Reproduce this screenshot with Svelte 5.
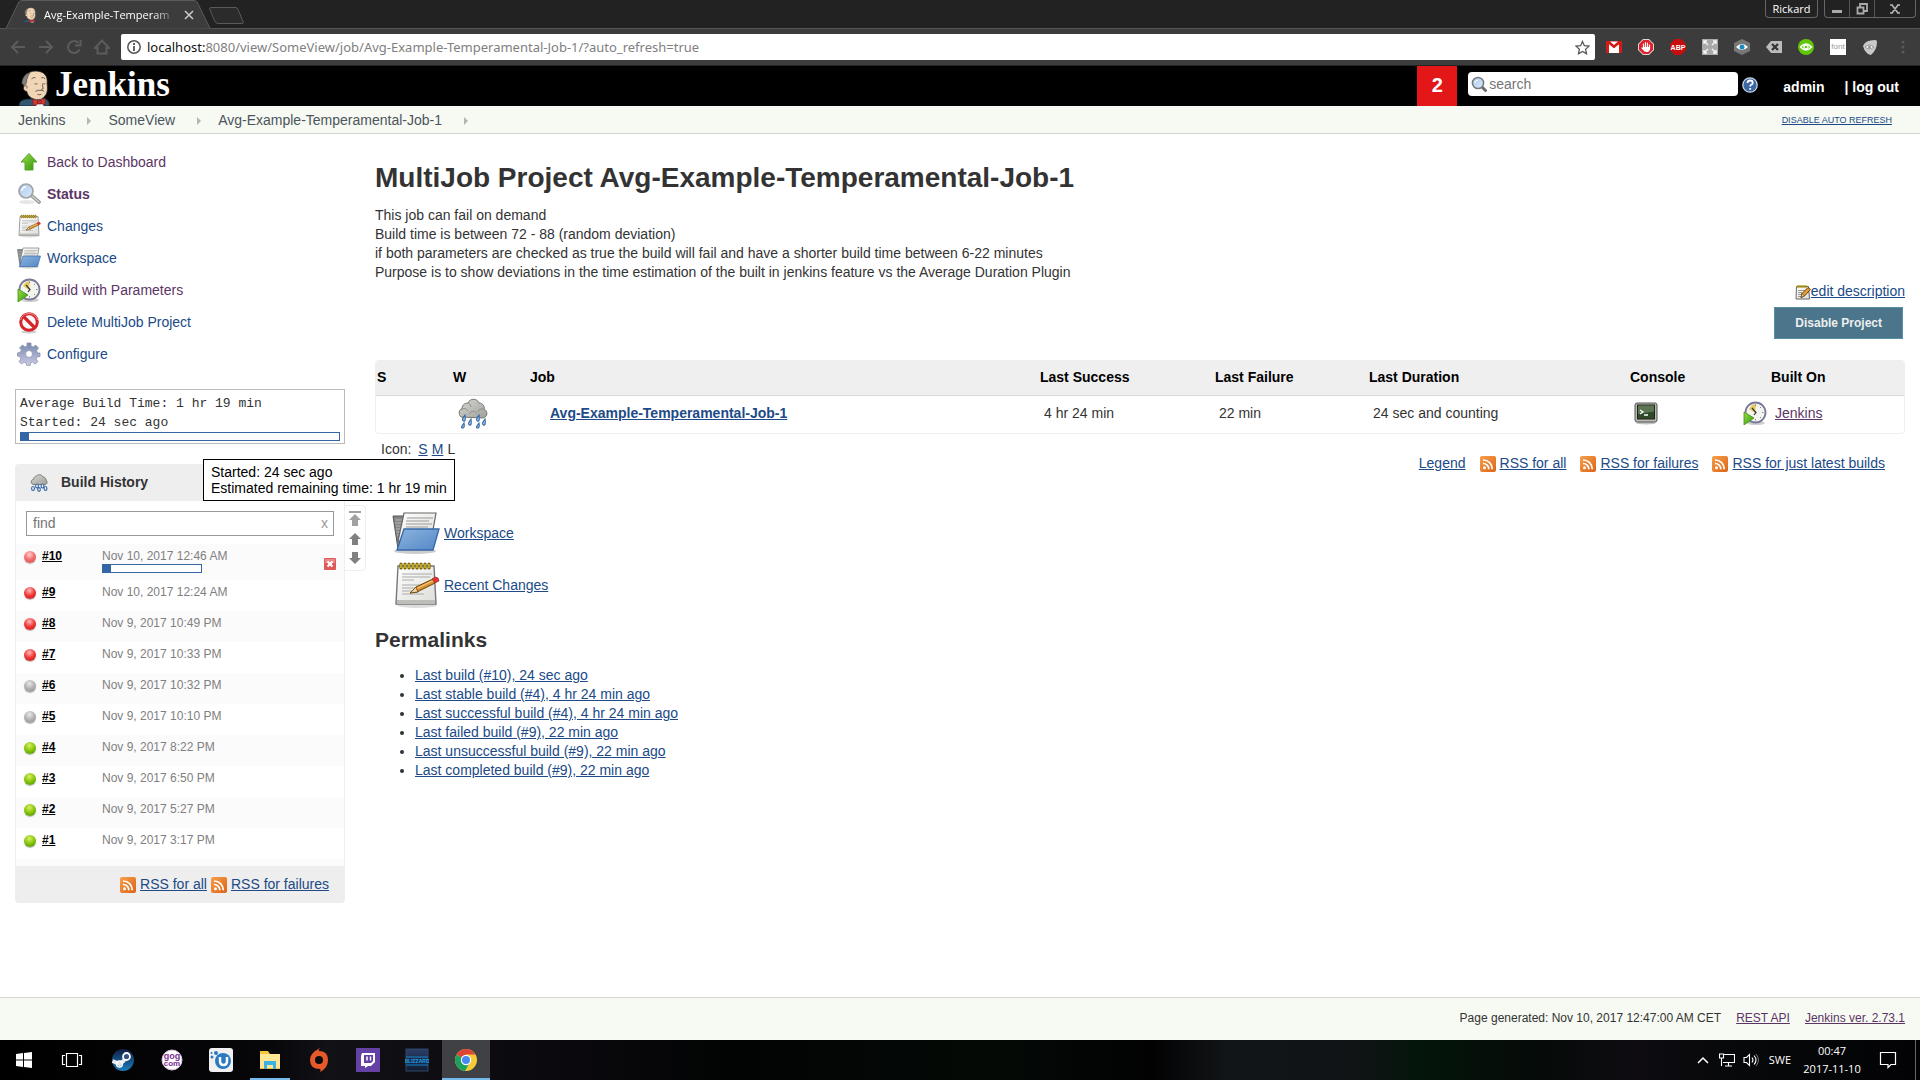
<script>
  const tasks = [
    { icon: 'up', label: 'Back to Dashboard', visited: true },
    { icon: 'magnifier', label: 'Status', visited: true, current: true },
    { icon: 'notepad', label: 'Changes' },
    { icon: 'folder', label: 'Workspace' },
    { icon: 'clock', label: 'Build with Parameters', visited: true },
    { icon: 'forbidden', label: 'Delete MultiJob Project' },
    { icon: 'gear', label: 'Configure' }
  ];
  const builds = [
    { id: 10, date: 'Nov 10, 2017 12:46 AM', ball: 'fade', running: true },
    { id: 9, date: 'Nov 10, 2017 12:24 AM', ball: 'red' },
    { id: 8, date: 'Nov 9, 2017 10:49 PM', ball: 'red' },
    { id: 7, date: 'Nov 9, 2017 10:33 PM', ball: 'red' },
    { id: 6, date: 'Nov 9, 2017 10:32 PM', ball: 'grey' },
    { id: 5, date: 'Nov 9, 2017 10:10 PM', ball: 'grey' },
    { id: 4, date: 'Nov 9, 2017 8:22 PM', ball: 'green' },
    { id: 3, date: 'Nov 9, 2017 6:50 PM', ball: 'green' },
    { id: 2, date: 'Nov 9, 2017 5:27 PM', ball: 'green' },
    { id: 1, date: 'Nov 9, 2017 3:17 PM', ball: 'green' }
  ];
  const permalinks = [
    'Last build (#10), 24 sec ago',
    'Last stable build (#4), 4 hr 24 min ago',
    'Last successful build (#4), 4 hr 24 min ago',
    'Last failed build (#9), 22 min ago',
    'Last unsuccessful build (#9), 22 min ago',
    'Last completed build (#9), 22 min ago'
  ];
  const crumbs = ['Jenkins', 'SomeView', 'Avg-Example-Temperamental-Job-1'];
  const extensions = ['gmail', 'adblock', 'abp', 'expand', 'eye', 'clear', 'ring', 'font', 'shield'];
  const apps = ['start', 'taskview', 'steam', 'gog', 'uplay', 'explorer', 'origin', 'twitch', 'blizzard', 'chrome'];
</script>

{#snippet mascot(cls)}
  <svg class={cls} viewBox="0 0 34 37" aria-hidden="true">
    <path d="M1 37c0-4 2-6 7-7l18-1c5 1 7 4 6 8z" fill="#33566f" stroke="#16242e" stroke-width=".8" />
    <path d="M17 30l5-2 5 3-1 6h-7z" fill="#f4f4f4" />
    <path d="M6 17C4 9 9 1 18 1c9 0 13 5 12 13 1 8 0 12-6 16-7 2-14-2-15-8-3 0-4-3-3-5z" fill="#f0d6b7" stroke="#231f20" stroke-width=".8" />
    <path d="M4 14C4 8 8 3 12 3c-2 3-2 5-3 7 0 3-1 5-2 6z" fill="#81807c" stroke="#3a3a38" stroke-width=".6" />
    <path d="M7 17c2-2 3 0 2 2M14 9q2-2 4-1M24 8q2-1 4 1M17 14q2 1 3 0M25 14q2 1 3 0M25 15l1 4-2 1" fill="none" stroke="#4a3b33" stroke-width=".8" />
    <path d="M18 22q3-2 4-1 3-1 5 1M20 25q2 1 4 0" fill="none" stroke="#4a3b33" stroke-width=".8" />
    <path d="M15 30l6 2 7-3v7l-6-2-6 3zM20 31h4v4h-4z" fill="#d33833" stroke="#7b1512" stroke-width=".6" />
  </svg>
{/snippet}

{#snippet icon(name, size)}
  {#if name === 'up'}
    <svg width={size} height={size} viewBox="0 0 24 24" aria-hidden="true">
      <path d="M12 3.500l8 8.500h-4v8H8v-8H4z" fill="url(#g-green)" stroke="#5aa02c" stroke-width="1" />
    </svg>
  {:else if name === 'magnifier'}
    <svg width={size} height={size} viewBox="0 0 24 24" aria-hidden="true">
      <ellipse cx="10" cy="20" rx="8" ry="2" fill="#ddd" opacity=".7" />
      <path d="M15 14l7 6" stroke="#8b8d89" stroke-width="3.600" stroke-linecap="round" />
      <path d="M15 14l7 6" stroke="#d5d6d2" stroke-width="1.500" stroke-linecap="round" />
      <circle cx="9" cy="9" r="7" fill="url(#g-glass)" stroke="#a2a5a8" stroke-width="1.700" />
      <path d="M5 9q0-4 4-4" stroke="#fff" fill="none" stroke-width="1.400" />
    </svg>
  {:else if name === 'find'}
    <svg width={size} height={size} viewBox="0 0 16 16" aria-hidden="true">
      <path d="M10.500 10.500l4 4" stroke="#6a6c6a" stroke-width="3" stroke-linecap="round" />
      <circle cx="7" cy="7" r="5.600" fill="url(#g-glass)" stroke="#75787c" stroke-width="1.500" />
      <path d="M4 7q0-3 3-3" stroke="#fff" fill="none" stroke-width="1" />
    </svg>
  {:else if name === 'edit'}
    <svg width={size} height={size} viewBox="0 0 16 16" aria-hidden="true">
      <path d="M1.500 2.500h12l1 12.500H1z" fill="url(#g-paper)" stroke="#666" stroke-width="1" />
      <path d="M3 1v3M5 1v3M7 1v3M9 1v3M11 1v3" stroke="#b59a10" stroke-width="1.300" />
      <path d="M3 6.500h7M3 8.500h4M3 10.500h3M3 12.500h3" stroke="#999" />
      <path d="M6 13.500l1-4 6-6 2.500 2-6 6.500z" fill="#e39b31" stroke="#5c3a08" stroke-width=".9" />
      <path d="M6 13.500l1-4 2.500 2.500z" fill="#f0deb4" stroke="#5c3a08" stroke-width=".7" />
    </svg>
  {:else if name === 'notepad'}
    <svg width={size} height={size} viewBox="0 0 48 48" aria-hidden="true">
      <ellipse cx="25" cy="44" rx="20" ry="3" fill="#bbb" opacity=".5" />
      <path d="M6 5h36l2 38H4z" fill="url(#g-paper)" stroke="#777" stroke-width="1.400" />
      <path d="M5 39h38v4H5z" fill="#bdbdb9" />
      <path d="M10 13h30M10 16h28M10 19h12M10 24h24M10 27h20M10 30h14M10 33h22" stroke="#aaa" stroke-width="1" />
      <path d="M9 3v4M13 3v4M17 3v4M21 3v4M25 3v4M29 3v4M33 3v4M37 3v4" stroke="#7b6500" stroke-width="3.200" stroke-linecap="round" />
      <path d="M9 3v4M13 3v4M17 3v4M21 3v4M25 3v4M29 3v4M33 3v4M37 3v4" stroke="#e6cb38" stroke-width="1.300" />
      <path d="M18 32l6-6 17-8 2 4-18 9z" fill="#d9902c" stroke="#6b4106" stroke-width="1" />
      <path d="M24 27l17-8 1 1-17 8z" fill="#f3c06c" />
      <path d="M18 32l6-6 2 5z" fill="#e8d2a8" stroke="#6b4106" stroke-width=".8" />
      <path d="M40 18l3-2q4 0 4 4l-4 2z" fill="#ee2e2e" stroke="#8b3a2a" stroke-width=".7" />
    </svg>
  {:else if name === 'folder'}
    <svg width={size} height={size} viewBox="0 0 48 48" aria-hidden="true">
      <ellipse cx="23" cy="42" rx="21" ry="3" fill="#999" opacity=".5" />
      <path d="M1 7h12l2 3h8v30H6z" fill="#858585" stroke="#555" stroke-width="1" />
      <path d="M3 11h9M3 14h9M4 17h8M4 20h8M4 23h8M5 26h6" stroke="#b8b8b8" stroke-width="1" />
      <path d="M12 4h32l-5 28H6z" fill="url(#g-paper)" stroke="#666" stroke-width="1.200" />
      <path d="M15 9h26M14 12h23M14 15h26M14 18h22" stroke="#999" stroke-width="1" />
      <path d="M12 20h35l-6 21H5z" fill="url(#g-blue)" stroke="#3567a8" stroke-width="1.300" />
    </svg>
  {:else if name === 'clock'}
    <svg width={size} height={size} viewBox="0 0 24 24" aria-hidden="true">
      <ellipse cx="13" cy="22" rx="9" ry="2" fill="#bbb" opacity=".7" />
      <circle cx="12.500" cy="11.500" r="10" fill="#f4f4ee" stroke="#78799b" stroke-width="1.800" />
      <path d="M12 12L6 8l3-4 4-1z" fill="#e5c95a" />
      <path d="M12.500 3.500v1.500M20.500 11.500H19M12.500 19.500V18M18 6l-1 1M18 17l-1-1" stroke="#888" stroke-width="1" />
      <path d="M9 7l4 4.500-2 2.500" fill="none" stroke="#333" stroke-width="1.200" />
      <path d="M1 11l10 6-10 7z" fill="url(#g-green)" stroke="#3f8f0c" stroke-width=".8" />
    </svg>
  {:else if name === 'forbidden'}
    <svg width={size} height={size} viewBox="0 0 24 24" aria-hidden="true">
      <ellipse cx="12" cy="22" rx="8" ry="1.500" fill="#bbb" opacity=".7" />
      <circle cx="12" cy="12" r="8.300" fill="#fafafa" stroke="#d6262a" stroke-width="3" />
      <path d="M6.500 6.500l11 11" stroke="#d6262a" stroke-width="3.200" />
      <path d="M3.500 10a8.800 8.800 0 0 1 17 0" fill="none" stroke="#f08c8c" stroke-width="1" />
    </svg>
  {:else if name === 'gear'}
    <svg width={size} height={size} viewBox="0 0 24 24" aria-hidden="true">
      <g stroke="#8a93ac" stroke-width=".8">
        <path d="M10 4V1h4v3l2.500 1L18.500 3l3 3-2 2.500L20.500 11H23v3.500l-3 .5-1 2 2 2.500-3 2.500-2.500-2-2 1-.5 3h-3l-1-3-2-1L4.500 22 2 19.500 4 17l-1-2.500-2.500-.5v-3L3.500 10l1-2L2.500 6l3-3L8 5z" fill="url(#g-gear)" />
        <circle cx="12" cy="12" r="3.500" fill="#fff" />
      </g>
    </svg>
  {:else if name === 'rain'}
    <svg width={size} height={size} viewBox="0 0 32 32" aria-hidden="true">
      <path d="M4 20c-3-3-2-8 1-8 0-5 4-6 6-6 2-5 9-5 11 0 4 0 6 4 5 6 4 2 4 8-1 9z" fill="url(#g-cloud)" stroke="#757570" stroke-width="1" />
      <path d="M5 12q4-2 6 2M11 6q3 1 3 4M27 12q-5-1-6 3M12 17q3-5 8-1" fill="none" stroke="#92928c" stroke-width="1" />
      <g fill="#a9c7ec" stroke="#3465a4" stroke-width="1.100">
        <path d="M8 18q-4 5-1.500 6T8 18zM14 22q-4 5-1.500 6T14 22zM22 18q-4 5-1.500 6T22 18zM28 22q-4 5-1.500 6T28 22zM7 26q-4 5-1.500 5T7 26zM22 26q-4 5-1.500 5T22 26z" />
      </g>
    </svg>
  {:else if name === 'rain-small'}
    <svg width={size} height={size} viewBox="0 0 18 18" aria-hidden="true">
      <path d="M3 10.500C0 9 1 5.500 3.500 5.500 4 2 6 2.500 7 1.500c2-1.500 5-1 6 1.500 2 0 3 1.500 3 3 2 2 1 4.500-1 4.500z" fill="url(#g-cloud)" stroke="#757570" stroke-width=".9" />
      <g fill="#fff" stroke="#3465a4" stroke-width="1.200">
        <ellipse cx="3" cy="14.500" rx="1.400" ry="2" /><ellipse cx="7" cy="12" rx="1.400" ry="2" /><ellipse cx="9" cy="15.500" rx="1.300" ry="1.800" /><ellipse cx="12.500" cy="12" rx="1.400" ry="2" /><ellipse cx="15.500" cy="14.500" rx="1.400" ry="2" />
      </g>
    </svg>
  {:else if name === 'console'}
    <svg width={size} height={size} viewBox="0 0 24 24" aria-hidden="true">
      <ellipse cx="12" cy="22" rx="10" ry="1.500" fill="#999" opacity=".6" />
      <rect x="1" y="2" width="22" height="19" rx="2" fill="#b9bab5" stroke="#555753" />
      <rect x="3.500" y="4" width="17" height="14" fill="#2f4a27" stroke="#20241d" />
      <path d="M4 4.500h16v6L4 13z" fill="#5c7653" />
      <path d="M6 9l3 2-3 2M10 14h4" fill="none" stroke="#fff" stroke-width="1.300" />
    </svg>
  {:else if name === 'rss'}
    <svg width={size} height={size} viewBox="0 0 16 16" aria-hidden="true">
      <rect width="16" height="16" rx="2" fill="url(#g-orange)" />
      <circle cx="4.500" cy="11.800" r="1.500" fill="#fff" />
      <path d="M3 7.500a5.700 5.700 0 0 1 5.800 5.800M3 4a9.200 9.200 0 0 1 9.300 9.300" fill="none" stroke="#fff" stroke-width="1.700" />
    </svg>
  {/if}
{/snippet}

{#snippet rss(label)}
  <span class="rss">{@render icon('rss', 16)}<a href="#rss">{label}</a></span>
{/snippet}

<svg class="defs" width="0" height="0" aria-hidden="true">
  <defs>
    <linearGradient id="g-green" x1="0" y1="0" x2="1" y2="1"><stop offset="0" stop-color="#9be04b" /><stop offset="1" stop-color="#2f9407" /></linearGradient>
    <linearGradient id="g-glass" x1="0" y1="0" x2="1" y2="1"><stop offset="0" stop-color="#a9c9ee" /><stop offset="1" stop-color="#deebf8" /></linearGradient>
    <linearGradient id="g-paper" x1="0" y1="0" x2="1" y2="1"><stop offset="0" stop-color="#fff" /><stop offset="1" stop-color="#dcdcd8" /></linearGradient>
    <linearGradient id="g-blue" x1="0" y1="0" x2="1" y2="1"><stop offset="0" stop-color="#8db4dd" /><stop offset="1" stop-color="#5388c8" /></linearGradient>
    <linearGradient id="g-gear" x1="0" y1="0" x2="0" y2="1"><stop offset="0" stop-color="#7488ae" /><stop offset="1" stop-color="#d0cce6" /></linearGradient>
    <linearGradient id="g-cloud" x1="0" y1="0" x2="1" y2="1"><stop offset="0" stop-color="#d6d6d2" /><stop offset="1" stop-color="#a0a09b" /></linearGradient>
    <linearGradient id="g-orange" x1="0" y1="0" x2="1" y2="1"><stop offset="0" stop-color="#f7a04c" /><stop offset="1" stop-color="#dc6417" /></linearGradient>
    <linearGradient id="g-steam" x1="0" y1="0" x2="0" y2="1"><stop offset="0" stop-color="#101f45" /><stop offset="1" stop-color="#1b7fc0" /></linearGradient>
    <linearGradient id="g-bliz" x1="0" y1="0" x2="0" y2="1"><stop offset="0" stop-color="#2b3e66" /><stop offset="1" stop-color="#101d33" /></linearGradient>
  </defs>
</svg>

<div class="screen">
  <div class="tabstrip">
    <div class="tab">
      <svg class="tab-shape" viewBox="0 0 208 29" preserveAspectRatio="none" aria-hidden="true">
        <path d="M0 28.500L13 2q1-1.500 3-1.500h174q2 0 3 1.500l13 26.500z" fill="#3c3c3c" />
        <path d="M0 28.500L13 2q1-1.500 3-1.500h174q2 0 3 1.500l13 26.500" fill="none" stroke="#5c5c5c" />
      </svg>
      {@render mascot('favicon')}
      <span class="tab-title">Avg-Example-Temperam</span>
      <button class="tab-close" aria-label="Close tab">
        <svg width="10" height="10" viewBox="0 0 10 10"><path d="M1 1l8 8M9 1L1 9" stroke="#c8c8c8" stroke-width="1.600" /></svg>
      </button>
    </div>
    <button class="new-tab" aria-label="New tab">
      <svg width="36" height="18" viewBox="0 0 36 18"><path d="M2 .5h25q1 0 2 2l5 12q1 2-1 2H9q-2 0-3-2L1 3Q0 .5 2 .5z" fill="#2b2b2b" stroke="#5a5a5a" /></svg>
    </button>
    <div class="window-controls">
      <button class="profile">Rickard</button>
      <div class="win-buttons">
        <button aria-label="Minimize"><svg width="12" height="12" viewBox="0 0 12 12"><path d="M1 8.500h10" stroke="#aaa" stroke-width="3" /></svg></button>
        <button aria-label="Restore"><svg width="12" height="12" viewBox="0 0 12 12"><path d="M4 4V1h7v7H8M1.500 4.500h6v6h-6z" fill="none" stroke="#aaa" stroke-width="1.800" /></svg></button>
        <button class="wide" aria-label="Close"><svg width="10" height="10" viewBox="0 0 10 10"><path d="M2 1l6 8M8 1L2 9M0 1h3M7 1h3M0 9h3M7 9h3" stroke="#b5b5b5" stroke-width="1.600" /></svg></button>
      </div>
    </div>
  </div>

  <div class="toolbar">
    <div class="nav">
      <button aria-label="Back"><svg viewBox="0 0 16 16"><path d="M15 8H2M8 2L2 8l6 6" /></svg></button>
      <button aria-label="Forward"><svg viewBox="0 0 16 16"><path d="M1 8h13M8 2l6 6-6 6" /></svg></button>
      <button aria-label="Reload"><svg viewBox="0 0 16 16"><path d="M13.500 10.500A6 6 0 1 1 12.500 4M14.500 1v5.500H9" /></svg></button>
      <button aria-label="Home"><svg viewBox="0 0 16 16"><path d="M1 9l7-7.500L15 9h-2.500v5.500h-9V9z" /></svg></button>
    </div>
    <div class="omnibox">
      <svg width="14" height="14" viewBox="0 0 14 14" aria-hidden="true"><circle cx="7" cy="7" r="6.200" fill="none" stroke="#555" stroke-width="1.500" /><path d="M7 3v2M7 6v5" stroke="#555" stroke-width="1.800" /></svg>
      <span class="url"><b>localhost:</b>8080/view/SomeView/job/Avg-Example-Temperamental-Job-1/?auto_refresh=true</span>
      <button class="star" aria-label="Bookmark this page">
        <svg width="15" height="15" viewBox="0 0 16 16"><path d="M8 1.500l2 4.500 5 .5-3.700 3.300 1 4.900L8 12.200l-4.300 2.500 1-4.900L1 6.500 6 6z" fill="none" stroke="#555" stroke-width="1.300" /></svg>
      </button>
    </div>
    <div class="extensions">
      {#each extensions as name}
        <button aria-label={name}>
          <svg width="16" height="16" viewBox="0 0 16 16">
            {#if name === 'gmail'}
              <rect y="2" width="16" height="12" rx="1" fill="#d21c16" /><path d="M3 14V5l5 4 5-4v9z" fill="#fff" /><path d="M2 3l6 5 6-5" fill="none" stroke="#d21c16" stroke-width="2" /><path d="M4 2.500h8L8 6z" fill="#fff" />
            {:else if name === 'adblock'}
              <path d="M5 0h6l5 5v6l-5 5H5l-5-5V5z" fill="#d9d9d9" /><path d="M5.300 1h5.400L15 5.300v5.400L10.700 15H5.300L1 10.700V5.300z" fill="#e0212b" /><path d="M5.500 5v4M7.500 3.500v5M9.500 4v5M11.500 6v4M4 9l3 3" stroke="#fff" stroke-width="1.200" fill="none" stroke-linecap="round" /><path d="M5 8h7v3l-2 2H8l-3-3z" fill="#fff" />
            {:else if name === 'abp'}
              <path d="M5 0h6l5 5v6l-5 5H5l-5-5V5z" fill="#c70d0d" /><text x="8" y="11" text-anchor="middle" font-size="7" font-weight="700" fill="#fff">ABP</text>
            {:else if name === 'expand'}
              <rect width="16" height="16" fill="#aaa" /><path d="M2 5V2h3M11 2h3v3M14 11v3h-3M5 14H2v-3M2 2l4 4M14 2l-4 4M14 14l-4-4M2 14l4-4" stroke="#f5f5f5" stroke-width="1.400" fill="none" />
            {:else if name === 'eye'}
              <path d="M8 0l8 4v8l-8 4-8-4V4z" fill="#777" /><path d="M2 8q6-6 12 0-6 6-12 0z" fill="#fff" /><circle cx="8" cy="8" r="2.500" fill="#1b8cc0" />
            {:else if name === 'clear'}
              <path d="M5 2h11v12H5L0 8z" fill="#bbb" /><path d="M6 5l6 6M12 5l-6 6" stroke="#333" stroke-width="2.200" />
            {:else if name === 'ring'}
              <circle cx="8" cy="8" r="8" fill="#5fc60a" /><path d="M2.500 8q5.500-6 11 0-5.500 6-11 0z" fill="none" stroke="#fff" stroke-width="1.500" /><circle cx="8" cy="8" r="2" fill="none" stroke="#fff" stroke-width="1.300" />
            {:else if name === 'font'}
              <rect width="16" height="16" fill="#fff" /><text x="8" y="10" text-anchor="middle" font-size="8" fill="#999">font</text>
            {:else}
              <path d="M1 7Q3 1 13 1q2 0 2 2 0 8-6 13-3 0-5-3-2-2-3-6z" fill="#c9c9c9" /><path d="M3 8q4-4 9 0-5 4-9 0z" fill="#eee" stroke="#999" /><circle cx="7.500" cy="8" r="1.500" fill="#999" />
            {/if}
          </svg>
        </button>
      {/each}
      <button class="menu" aria-label="Menu"><svg width="4" height="16" viewBox="0 0 4 16" fill="#5a5a5a"><circle cx="2" cy="3" r="1.500" /><circle cx="2" cy="8" r="1.500" /><circle cx="2" cy="13" r="1.500" /></svg></button>
    </div>
  </div>

  <header>
    <a class="brand" href="#home">{@render mascot('logo')}<span>Jenkins</span></a>
    <a class="alerts" href="#alerts">2</a>
    <label class="search">
      {@render icon('find', 16)}
      <input type="text" placeholder="search" aria-label="search" />
    </label>
    <a class="help" href="#help" aria-label="Search help">
      <svg width="16" height="16" viewBox="0 0 16 16"><circle cx="8" cy="8" r="7.200" fill="#3c67a5" stroke="#c9d6e8" stroke-width="1.300" /><path d="M5.500 6q0-2.500 2.700-2.500 2.500 0 2.500 2.200 0 1.300-1.500 2-1 .5-1 1.800M8.200 11v1.800" fill="none" stroke="#fff" stroke-width="1.800" /></svg>
    </a>
    <a class="user" href="#admin">admin</a>
    <a class="logout" href="#logout">| log out</a>
  </header>

  <nav class="breadcrumbs" aria-label="Breadcrumb">
    {#each crumbs as crumb}
      <a href="#crumb">{crumb}</a>
      <svg width="4" height="8" viewBox="0 0 4 8" aria-hidden="true"><path d="M0 0l4 4-4 4z" fill="#b4b6b0" /></svg>
    {/each}
    <a class="refresh" href="#refresh">DISABLE AUTO REFRESH</a>
  </nav>

  <div class="page">
    <aside>
      <nav class="tasks" aria-label="Tasks">
        {#each tasks as task}
          <a href="#task" class:visited={task.visited} class:current={task.current}>{@render icon(task.icon, 24)}<span>{task.label}</span></a>
        {/each}
      </nav>

      <div class="average">
        <div>Average Build Time: 1 hr 19 min</div>
        <div>Started: 24 sec ago</div>
        <div class="progress"><i></i></div>
      </div>

      <section class="history">
        <h2>{@render icon('rain-small', 18)}<span>Build History</span></h2>
        <div class="tooltip" role="tooltip">Started: 24 sec ago<br />Estimated remaining time: 1 hr 19 min</div>
        <div class="pager">
          <button aria-label="Newest"><svg width="12" height="15" viewBox="0 0 12 15" fill="#a0a0a0"><path d="M0 0h12v2H0zM6 3l6 6H9v6H3V9H0z" /></svg></button>
          <button aria-label="Newer"><svg width="12" height="12" viewBox="0 0 12 12" fill="#808080"><path d="M6 0l6 6H9v6H3V6H0z" /></svg></button>
          <button aria-label="Older"><svg width="12" height="12" viewBox="0 0 12 12" fill="#808080"><path d="M6 12l6-6H9V0H3v6H0z" /></svg></button>
        </div>
        <div class="history-body">
          <div class="find">
            <input type="text" placeholder="find" aria-label="find" />
            <button aria-label="Clear">x</button>
          </div>
          <ul>
            {#each builds as build}
              <li>
                <span class="ball {build.ball}"></span>
                <a href="#build">#{build.id}</a>
                <div class="when">
                  <span>{build.date}</span>
                  {#if build.running}<div class="progress small"><i></i></div>{/if}
                </div>
                {#if build.running}
                  <button class="stop" aria-label="Cancel build"><svg width="12" height="12" viewBox="0 0 12 12"><rect width="12" height="12" rx="1" fill="#dd5a5a" /><path d="M1 1h10v4H1z" fill="#e88" /><path d="M3.500 3.500l5 5M8.500 3.500l-5 5" stroke="#fff" stroke-width="2" /></svg></button>
                {/if}
              </li>
            {/each}
          </ul>
        </div>
        <div class="history-foot">{@render rss('RSS for all')}{@render rss('RSS for failures')}</div>
      </section>
    </aside>

    <main>
      <h1>MultiJob Project Avg-Example-Temperamental-Job-1</h1>
      <p class="description">
        This job can fail on demand<br />
        Build time is between 72 - 88 (random deviation)<br />
        if both parameters are checked as true the build will fail and have a shorter build time between 6-22 minutes<br />
        Purpose is to show deviations in the time estimation of the built in jenkins feature vs the Average Duration Plugin
      </p>
      <div class="actions">
        <span class="edit">{@render icon('edit', 16)}<a href="#edit">edit description</a></span>
        <button class="disable">Disable Project</button>
      </div>

      <div class="table-frame">
        <table>
          <colgroup>
            <col class="c-s" /><col class="c-w" /><col /><col class="c-success" /><col class="c-failure" /><col class="c-duration" /><col class="c-console" /><col class="c-built" />
          </colgroup>
          <thead>
            <tr><th>S</th><th>W</th><th>Job</th><th>Last Success</th><th>Last Failure</th><th>Last Duration</th><th>Console</th><th class="built">Built On</th></tr>
          </thead>
          <tbody>
            <tr>
              <td></td>
              <td class="weather">{@render icon('rain', 32)}</td>
              <td class="job"><a href="#job">Avg-Example-Temperamental-Job-1</a></td>
              <td>4 hr 24 min</td>
              <td>22 min</td>
              <td>24 sec and counting</td>
              <td><a class="cell" href="#console" aria-label="Console">{@render icon('console', 24)}</a></td>
              <td><span class="cell">{@render icon('clock', 24)}<a class="visited" href="#node">Jenkins</a></span></td>
            </tr>
          </tbody>
        </table>
      </div>

      <div class="table-foot">
        <div class="sizes"><span>Icon:</span><a href="#s">S</a><a href="#m">M</a><span>L</span></div>
        <div class="feeds">
          <a href="#legend">Legend</a>
          {@render rss('RSS for all')}{@render rss('RSS for failures')}{@render rss('RSS for just latest builds')}
        </div>
      </div>

      <div class="shortcuts">
        <div>{@render icon('folder', 48)}<a href="#workspace">Workspace</a></div>
        <div>{@render icon('notepad', 48)}<a href="#changes">Recent Changes</a></div>
      </div>

      <h2 class="perma">Permalinks</h2>
      <ul class="links">
        {#each permalinks as link}<li><a href="#link">{link}</a></li>{/each}
      </ul>
    </main>
  </div>

  <footer>
    <span>Page generated: Nov 10, 2017 12:47:00 AM CET</span>
    <a href="#api">REST API</a>
    <a href="#version">Jenkins ver. 2.73.1</a>
  </footer>

  <div class="taskbar">
    <div class="apps">
      {#each apps as app}
        <button class={app} aria-label={app}>
          <svg width="24" height="24" viewBox="0 0 24 24">
            {#if app === 'start'}
              <path d="M4 6l7-1v6.500H4zM12 5l8-1v7.500h-8zM4 12.500h7V19l-7-1zM12 12.500h8V20l-8-1z" fill="#fff" />
            {:else if app === 'taskview'}
              <path d="M6.500 5.500h11v13h-11zM5 7.500H2.500v9H5M19 7.500h2.500v9H19" fill="none" stroke="#fff" stroke-width="1.200" />
            {:else if app === 'steam'}
              <circle cx="12" cy="12" r="11" fill="url(#g-steam)" /><path d="M1.500 13l7 3 4-3 3-5" stroke="#e8e8e8" stroke-width="4" fill="none" /><circle cx="8.500" cy="16" r="3" fill="none" stroke="#fff" stroke-width="1.300" /><circle cx="15.500" cy="8.500" r="3.500" fill="#34547e" stroke="#fff" stroke-width="1.800" />
            {:else if app === 'gog'}
              <circle cx="12" cy="12" r="10" fill="#fff" stroke="#d9c6e3" /><text x="12" y="11" text-anchor="middle" font-size="9" font-weight="700" fill="#7b2f92">gog</text><text x="12" y="18" text-anchor="middle" font-size="8" font-weight="700" fill="#7b2f92">com</text>
            {:else if app === 'uplay'}
              <rect width="24" height="24" rx="3" fill="#f0f0f0" /><circle cx="14" cy="13" r="8" fill="#2b79c2" /><path d="M11 9v4q0 4 3.500 4t3.500-4V9" fill="none" stroke="#fff" stroke-width="2.500" /><circle cx="7" cy="5" r="2" fill="#2b79c2" /><circle cx="3" cy="9" r="1.500" fill="#2b79c2" /><circle cx="2.500" cy="5" r="1" fill="#2b79c2" />
            {:else if app === 'explorer'}
              <path d="M2 3h8l2 3h10v15H2z" fill="#f5c542" /><path d="M2 6h20v14H2z" fill="#ffe594" /><path d="M6 21v-8h12v8h-3v-4H9v4z" fill="#3cb2e2" />
            {:else if app === 'origin'}
              <path d="M13 0q-2 3-1 3 9 0 9 9 0 8-8 12 1-3 0-3-10 0-10-9Q3 5 13 0z" fill="#e5592b" /><circle cx="12" cy="12" r="4" fill="#0b0c10" />
            {:else if app === 'twitch'}
              <rect width="24" height="24" fill="#6441a5" /><path d="M6 5h13v9l-4 4h-3l-3 2v-2H5V8z" fill="#fff" /><path d="M8 7h9v6l-2 2H8z" fill="#6441a5" /><path d="M11 8.500v4M14.500 8.500v4" stroke="#fff" stroke-width="1.500" />
            {:else if app === 'blizzard'}
              <rect x="1" y="1" width="22" height="22" fill="url(#g-bliz)" stroke="#32466b" /><text class="bliz" x="12" y="15" text-anchor="middle" font-size="5" font-weight="700" fill="#1aa4ee">BLIZZARD</text><path d="M1 9h22M1 17h22" stroke="#1187c9" />
            {:else}
              <circle cx="12" cy="12" r="11" fill="#f7cb38" /><path d="M12 12L2.500 6.500A11 11 0 0 1 21.500 6.500H12z" fill="#dc4437" /><path d="M2.500 6.500A11 11 0 0 0 11 23l5-8.700-8.500 0z" fill="#1ba15c" /><path d="M2.500 6.500L7 14.500l5-2.500z" fill="#1ba15c" /><circle cx="12" cy="12" r="5.200" fill="#fff" /><circle cx="12" cy="12" r="4" fill="#4688f1" />
            {/if}
          </svg>
        </button>
      {/each}
    </div>
    <div class="tray">
      <svg width="12" height="8" viewBox="0 0 12 8" aria-hidden="true"><path d="M1 7l5-5 5 5" fill="none" stroke="#fff" stroke-width="1.500" /></svg>
      <svg width="16" height="14" viewBox="0 0 16 14" aria-hidden="true"><path d="M5 1.500h10.500v8H4M9.500 10v3M6 13h7M.5 1h4v4h-4zM2.500 5v8" fill="none" stroke="#fff" stroke-width="1.100" /></svg>
      <svg width="16" height="14" viewBox="0 0 16 14" aria-hidden="true"><path d="M1 4.500h2.500l3-3v11l-3-3H1zM9 4.500q2 2.500 0 5M11 2.500q4 4.500 0 9" fill="none" stroke="#fff" stroke-width="1.100" /><path d="M13 1q5 6 0 12" fill="none" stroke="#777" /></svg>
      <span class="lang">SWE</span>
      <div class="time"><span>00:47</span><span>2017-11-10</span></div>
      <svg width="18" height="18" viewBox="0 0 18 18" aria-hidden="true"><path d="M1.500 1.500h15v12H12l-3 3v-3H1.500z" fill="none" stroke="#fff" stroke-width="1.200" /></svg>
      <span class="peek"></span>
    </div>
  </div>
</div>

<style>
  :global(body) { margin: 0; background: #fff; }
  * { box-sizing: border-box; }
  .screen { display: flex; flex-direction: column; min-height: 100vh; font: 14px/19px "Liberation Sans", Arial, sans-serif; color: #333; }
  svg { display: block; flex: none; }
  svg text { font-family: "Liberation Sans", Arial, sans-serif; }
  .defs { position: absolute; }
  button { font: inherit; color: inherit; background: none; border: 0; padding: 0; display: flex; align-items: center; justify-content: center; }
  a { color: #204a87; }
  .visited, footer a { color: #5c3566; }

  .tabstrip { display: flex; height: 29px; background: #222; border-bottom: 1px solid #555; padding-left: 6px; font: 11px/16px "Open Sans", "Noto Sans", sans-serif; }
  .tab { position: relative; display: flex; align-items: center; width: 206px; height: 29px; padding: 0 18px 0 17px; gap: 7px; }
  .tab-shape { position: absolute; inset: 0; width: 100%; height: 29px; }
  .tab > :global(*) { position: relative; }
  .tab > .tab-shape { position: absolute; }
  .favicon { width: 14px; height: 16px; }
  .tab-title { flex: 1; white-space: nowrap; color: #fff; mask-image: linear-gradient(90deg, #000 82%, transparent); }
  .new-tab { align-self: flex-start; padding: 7px 0 0; margin-left: -3px; }
  .window-controls { display: flex; gap: 6px; margin-left: auto; padding-right: 4px; align-items: flex-start; }
  .profile, .win-buttons { height: 18px; border: 1px solid #666; border-top: 0; border-radius: 0 0 4px 4px; color: #fff; }
  .profile { width: 53px; }
  .win-buttons { display: flex; }
  .win-buttons button { width: 25px; border-right: 1px solid #555; }
  .win-buttons .wide { width: 40px; border: 0; }

  .toolbar { display: flex; align-items: center; height: 37px; background: #3c3c3c; border-bottom: 1px solid #252525; padding-left: 10px; }
  .nav { display: flex; gap: 12px; margin-right: 11px; }
  .nav svg { width: 16px; height: 16px; fill: none; stroke: #5c5c5c; stroke-width: 2; }
  .omnibox { flex: 1; display: flex; align-items: center; gap: 6px; height: 26px; padding: 0 5px 0 6px; background: #fff; border-radius: 2px; font: 13px/20px "Noto Sans", "Open Sans", sans-serif; color: #808080; }
  .url { flex: 1; }
  .url b { color: #111; font-weight: 400; }
  .extensions { display: flex; align-items: center; gap: 16px; padding: 0 15px 0 11px; }
  .menu { margin-left: 7px; }

  header { display: flex; height: 40px; background: #000; padding: 0 21px 0 18px; font-weight: 700; }
  header a { color: #fff; text-decoration: none; }
  .brand { display: flex; align-items: flex-end; gap: 4px; margin-right: auto; font: 700 35px/40px "Liberation Serif", serif; }
  .brand span { align-self: flex-start; line-height: 38px; }
  .logo { width: 33px; height: 36px; }
  .alerts { width: 40px; background: #e31717; font-size: 20px; line-height: 39px; text-align: center; margin-right: 11px; }
  .search { display: flex; align-items: center; width: 270px; height: 24px; margin-top: 6px; padding-left: 3px; gap: 2px; background: #fff; border-radius: 4px; }
  .search input { flex: 1; min-width: 0; border: 0; padding: 0; outline: 0; background: none; font: inherit; font-weight: 400; }
  input::placeholder { color: #757575; opacity: 1; }
  .help { margin: 11px 25px 0 4px; }
  .user, .logout { line-height: 43px; }
  .logout { margin-left: 20px; }

  .breadcrumbs { display: flex; align-items: center; height: 28px; background: #f6faf2; border-bottom: 1px solid #d3d7cf; padding: 2px 28px 0 18px; }
  .breadcrumbs a { color: #4d545d; text-decoration: none; }
  .breadcrumbs svg { margin: 0 17px 0 22px; }
  .breadcrumbs .refresh { margin-left: auto; font-size: 9px; color: #204a87; text-decoration: underline; }

  .page { flex: 1; display: flex; gap: 30px; padding: 0 15px 40px; }
  aside { flex: none; width: 330px; padding-top: 12px; }
  .tasks a { display: flex; align-items: center; gap: 6px; height: 32px; padding-left: 2px; text-decoration: none; }
  .tasks .current { font-weight: 700; }
  .average { margin-top: 19px; padding: 4px 4px 2px; border: 1px solid #bbb; font-family: "Liberation Mono", monospace; font-size: 13px; }
  .progress { height: 9px; border: 1px solid #3465a4; background: #fff; }
  .progress i { display: block; width: 8px; height: 100%; background: #3465a4; }
  .progress.small { width: 100px; }

  .history { position: relative; margin-top: 20px; }
  .history h2 { display: flex; align-items: center; gap: 13px; height: 37px; margin: 0; padding-left: 15px; background: #eee; border-radius: 4px 4px 0 0; font-size: 14px; }
  .tooltip { position: absolute; z-index: 2; left: 188px; top: -5px; padding: 4px 7px; border: 1px solid #000; background: #fff; color: #000; line-height: 16px; white-space: nowrap; }
  .pager { position: absolute; left: 330px; top: 41px; display: flex; flex-direction: column; align-items: center; justify-content: space-between; width: 21px; height: 66px; padding: 5px 0 6px; border: 1px solid #eee; border-left: 0; border-radius: 0 4px 4px 0; background: #fff; }
  .history-body { border: solid #eee; border-width: 0 1px; padding-top: 10px; background: #fff; }
  .find { display: flex; height: 25px; margin: 0 10px 8px; border: 1px solid #999; padding: 0 5px 0 6px; }
  .find input { flex: 1; min-width: 0; border: 0; padding: 0; outline: 0; font: inherit; }
  .find button { color: #999; }
  ul { margin: 0; padding: 0; }
  .history ul { list-style: none; padding-bottom: 7px; background: #fbfbfb; }
  .history li { display: flex; align-items: flex-start; min-height: 31px; padding: 5px 8px 7px; font-size: 12px; line-height: 15px; background: #fff; }
  .history li:nth-child(odd) { background: #fbfbfb; }
  .history li a { width: 60px; color: #000; font-weight: 700; }
  .ball { width: 12px; height: 12px; margin: 2px 6px 0 0; border-radius: 50%; box-shadow: 0 1px 1px #bbb; }
  .fade { background: radial-gradient(circle at 45% 30%, #fcc 0, #f26a6a 50%, #d84848 100%); }
  .red { background: radial-gradient(circle at 45% 30%, #fbb 0, #f03434 50%, #c01818 100%); }
  .grey { background: radial-gradient(circle at 45% 30%, #e8e8e8 0, #b0b0b0 50%, #888 100%); }
  .green { background: radial-gradient(circle at 45% 30%, #d8f060 0, #84c408 50%, #3f8500 100%); }
  .when { flex: 1; color: #808080; }
  .when span { display: block; }
  .stop { margin-top: 9px; }
  .history-foot { display: flex; justify-content: flex-end; gap: 4px; height: 37px; padding: 0 16px; align-items: center; background: #eee; border-radius: 0 0 4px 4px; }
  .rss { display: flex; align-items: center; gap: 4px; }

  main { flex: 1; min-width: 0; padding-top: 25px; }
  h1 { margin: 0; font-size: 28px; line-height: 38px; }
  .description { margin: 9px 0 0; }
  .actions { display: flex; flex-direction: column; align-items: flex-end; gap: 6px; }
  .edit { display: flex; align-items: center; }
  .disable { height: 32px; margin-right: 2px; padding: 0 20px; background: #4b758b; border: 1px solid #5a8ea6; color: #eee; font-size: 12px; font-weight: 700; }
  .table-frame { margin-top: 21px; border: 1px solid #eee; border-radius: 4px; overflow: hidden; }
  table { width: 100%; table-layout: fixed; border-collapse: collapse; }
  th { height: 34px; padding: 0 0 0 2px; background: #efefef; border-bottom: 1px solid #d8d8d8; color: #000; text-align: left; }
  th:first-child { padding-left: 1px; }
  td { height: 38px; padding: 0 0 2px 6px; }
  .c-s { width: 75px; }
  .c-w { width: 77px; }
  .c-success { width: 175px; }
  .c-failure { width: 154px; }
  .c-duration { width: 261px; }
  .c-console { width: 109px; }
  .c-built { width: 167px; }
  th.built { padding-left: 34px; }
  td.job { padding-left: 22px; font-weight: 700; }
  .cell { display: flex; align-items: center; gap: 8px; }
  .table-foot { display: flex; justify-content: space-between; align-items: flex-start; padding: 6px 20px 0 6px; }
  .sizes { display: flex; gap: 4px; }
  .sizes span:first-child { margin-right: 3px; }
  .feeds { display: flex; gap: 14px; padding-top: 14px; }
  .shortcuts { margin-top: 36px; padding-left: 17px; display: flex; flex-direction: column; gap: 4px; }
  .shortcuts div { display: flex; align-items: center; gap: 4px; }
  .perma { margin: 17px 0 12px; font-size: 21px; line-height: 28px; }
  .links { padding-left: 40px; }

  footer { display: flex; align-items: center; justify-content: flex-end; gap: 15px; height: 43px; padding: 0 15px 2px; background: #f6faf2; border-top: 1px solid #d3d7cf; font-size: 12px; }

  .taskbar { display: flex; justify-content: space-between; height: 40px; color: #fff; font: 11px/18px "Open Sans", "Noto Sans", sans-serif; background: linear-gradient(90deg, #000 0, #07070a 14%, #111116 17%, #0a080d 30%, #020403 38%, #040906 52%, #020203 60%, #121518 64%, #111417 70%, #04150a 74%, #050b08 80%, #0e0c11 85%, #06080a 91%, #030305 100%); }
  .apps { display: flex; gap: 1px; }
  .apps button { width: 48px; border-bottom: 2px solid transparent; border-top: 2px solid transparent; }
  .apps .start { width: 47px; }
  .apps .taskview { margin-right: 2px; }
  .apps .explorer { background: linear-gradient(#76b9ed, #76b9ed) center 36px / 40px 2px no-repeat; }
  .apps .chrome { background: #3f4145; border-top-color: #3f4145; border-bottom-color: #76b9ed; }
  .tray { display: flex; align-items: center; gap: 10px; padding-right: 4px; }
  .tray svg:nth-child(2) { margin-right: -2px; }
  .time { display: flex; flex-direction: column; align-items: center; width: 62px; margin-right: 6px; }
  .peek { width: 1px; height: 40px; margin-left: 8px; background: #666; }
</style>
